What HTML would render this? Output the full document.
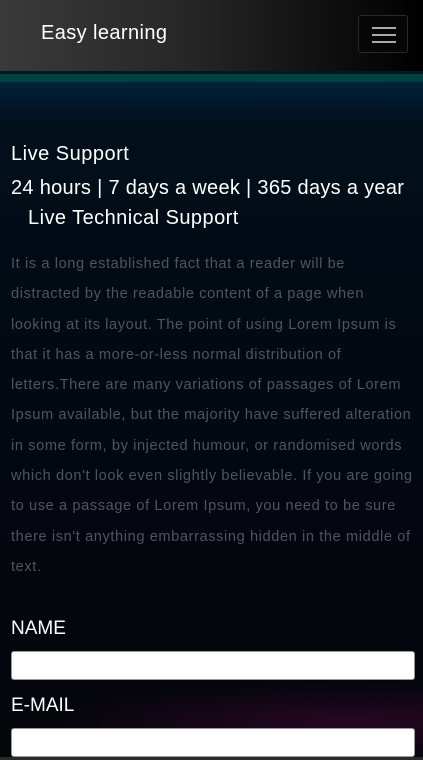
<!DOCTYPE html>
<html><head><meta charset="utf-8"><style>
*{margin:0;padding:0;box-sizing:border-box}
body{width:423px;height:760px;overflow:hidden;font-family:"Liberation Sans",sans-serif;background:#03080f;position:relative}
.hdr{position:absolute;left:0;top:0;width:423px;height:71px;background:linear-gradient(90deg,#3a3a3a 0%,#262626 45%,#000 100%);z-index:2}
.hdr .t{position:absolute;left:41px;top:22px;color:#fff;font-size:20px;letter-spacing:.4px}
.btn{position:absolute;left:358px;top:15px;width:50px;height:38px;border:1px solid #2a2a2a;border-radius:3px;background:#060606}
.btn i{position:absolute;left:13px;width:24px;height:2px;background:#aaa}
.line{position:absolute;left:0;top:71px;width:423px;height:11px;background:linear-gradient(#011825 0 3px,#004040 3px 11px);z-index:2}
.bg{position:absolute;left:0;top:82px;width:423px;height:678px;background:
radial-gradient(ellipse 300px 40px at 350px 640px,rgba(80,10,60,.45),transparent),
linear-gradient(#02223a 0,#02101c 40px,#020a14 200px,#04060e 500px,#05050c 100%)}
.c{position:absolute;left:11px;color:#fff;white-space:nowrap}
p{position:absolute;left:11px;top:249px;width:420px;font-size:14.6px;line-height:30.3px;color:#50555d;letter-spacing:.6px;white-space:nowrap}
input{position:absolute;left:11px;width:404px;height:29px;background:#fff;border:1px solid #999;border-radius:3px}
.foot{position:absolute;left:0;top:757px;width:423px;height:3px;background:#2a2a2a}
</style></head><body>
<div class="bg"></div>
<div class="hdr"><div class="t">Easy learning</div>
<div class="btn"><i style="top:11px"></i><i style="top:18px"></i><i style="top:25px"></i></div></div>
<div class="line"></div>
<div class="c" style="top:143px;font-size:20px;letter-spacing:.5px">Live Support</div>
<div class="c" style="top:177px;font-size:20px;letter-spacing:.3px">24 hours | 7 days a week | 365 days a year</div>
<div class="c" style="top:207px;left:28px;font-size:20px;letter-spacing:.45px">Live Technical Support</div>
<p>It is a long established fact that a reader will be<br>distracted by the readable content of a page when<br>looking at its layout. The point of using Lorem Ipsum is<br>that it has a more-or-less normal distribution of<br>letters.There are many variations of passages of Lorem<br>Ipsum available, but the majority have suffered alteration<br>in some form, by injected humour, or randomised words<br>which don't look even slightly believable. If you are going<br>to use a passage of Lorem Ipsum, you need to be sure<br>there isn't anything embarrassing hidden in the middle of<br>text.</p>
<div class="c" style="top:618px;font-size:19px">NAME</div>
<input style="top:651px">
<div class="c" style="top:695px;font-size:19px">E-MAIL</div>
<input style="top:728px">
<div class="foot"></div>
</body></html>
